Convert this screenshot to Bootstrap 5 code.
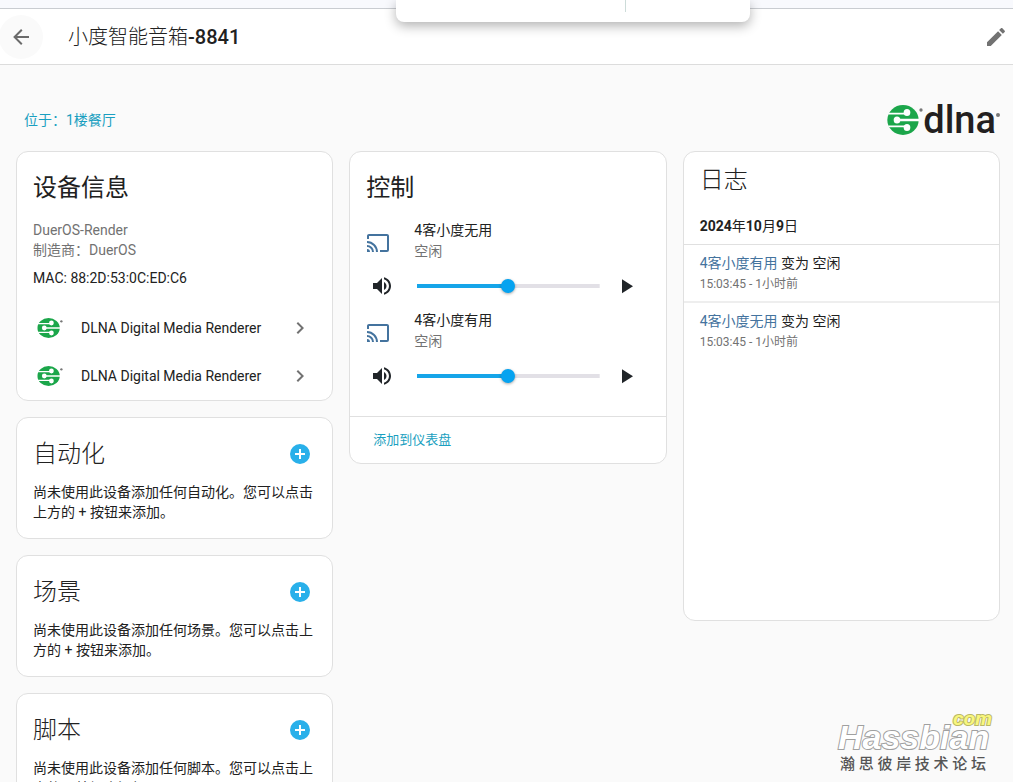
<!DOCTYPE html>
<html lang="zh-CN">
<head>
<meta charset="utf-8">
<meta name="viewport" content="width=device-width, initial-scale=1">
<title>小度智能音箱-8841</title>
<link href="https://cdn.jsdelivr.net/npm/bootstrap@5.3.0/dist/css/bootstrap.min.css" rel="stylesheet">
<style>
  body { font-family: Roboto, "Noto Sans CJK SC", sans-serif; font-size: 14px; line-height: 20px; color: #212121; background: #fafafa; }
  button { color: inherit; }
  a { text-decoration: none; }
  .browser-edge { height: 9px; background: #f8f9fd; border-bottom: 1px solid #c9ccd1; }
  .topbar { height: 56px; border-bottom: 1px solid #dcdcdc; }
  .back-btn { width: 44px; height: 44px; background: #fafafa; color: #6b6b6b; margin-left: -1px; }
  .page-title { font-size: 20px; line-height: 28px; margin-left: 25px; font-weight: 300; }
  .title-number { font-weight: 500; }
  .popup { left: 396px; top: 0; width: 354px; height: 22px; border-radius: 0 0 8px 8px; box-shadow: 0 4px 12px rgba(0,0,0,.3); }
  .popup-rule { width: 1px; height: 12px; background: #cddcd9; margin-left: 229px; }
  .page-main { padding: 39px 13px 16px 16px; }
  .location-row { height: 32px; margin-bottom: 15px; padding-left: 8px; }
  .teal { color: #1a9fc0; }
  .wordmark { font-size: 38px; line-height: 32px; font-weight: 500; color: #231f20; }
  .panel { border: 1px solid #e0e0e0; border-radius: 12px; background: #fff; }
  .panel-title { font-size: 24px; line-height: 48px; padding: 12px 16px 0; margin: 0; font-weight: 400; }
  .panel-title.light { font-weight: 300; }
  .soft { color: #727272; }
  .service-row { height: 48px; padding: 0 20px; color: #212121; }
  .service-name { margin-left: 18px; }
  .add-btn { width: 48px; height: 48px; margin: 12px 8px 0 0; color: #29b0ea; }
  .entity-info { line-height: 21px; gap: 24px; }
  .entity-icon { color: #44739e; padding-top: 4px; box-sizing: content-box; }
  .entity-controls { height: 48px; }
  .vol-btn { width: 32px; height: 32px; }
  .play-btn { width: 48px; height: 48px; }
  .volume { appearance: none; -webkit-appearance: none; height: 16px; margin: 0 2px 0 19px; background: linear-gradient(to right, #16a5e9 50%, #e2e0e6 50%) center / 100% 4px no-repeat; min-width: 0; }
  .volume::-webkit-slider-thumb { -webkit-appearance: none; width: 14px; height: 14px; border-radius: 50%; background: #06a3f0; box-shadow: 0 1px 3px rgba(0,0,0,.35); }
  .panel-foot { height: 47px; margin-top: 16px; padding-left: 23px; border-top: 1px solid #e0e0e0; font-size: 13px; }
  .log-panel { min-height: 470px; }
  .log-title { font-size: 24px; line-height: 32px; padding: 12px 16px 0; margin: 0; font-weight: 300; }
  .log-date { font-size: 14px; line-height: 20px; padding: 20px 16px 8px; margin: 0; font-weight: 700; border-bottom: 1px solid #e0e0e0; }
  .log-date span { font-weight: 400; }
  .log-entry { padding: 8px 16px 6px; line-height: 21px; }
  .log-entry + .log-entry { border-top: 2px solid #eee; }
  .log-entry a { color: #44739e; }
  .log-time { font-size: 12px; color: #727272; }
  .watermark { right: 21px; bottom: 8px; width: 154px; }
  .wm-name, .wm-com { font-family: "Liberation Sans", sans-serif; font-style: italic; font-weight: 700; paint-order: stroke fill; }
  .wm-name { font-size: 34px; line-height: 34px; color: #fff; -webkit-text-stroke: 2px #a0a0a0; }
  .wm-com { right: 0; top: -11px; font-size: 19px; line-height: 20px; color: #f9f77c; -webkit-text-stroke: 2px #b9b768; }
  .wm-sub { width: 148px; font-size: 15px; line-height: 20px; font-weight: 500; color: #555; text-align-last: justify; padding-left: 2px; }
</style>
</head>
<body class="vh-100 overflow-hidden position-relative">
<svg class="d-none">
  <symbol id="dlna" viewBox="0 0 108 84">
    <ellipse cx="48" cy="42" rx="47" ry="42" fill="#1ba64a"/>
    <g fill="none" stroke="#fff" stroke-width="5"><path d="M4 24H58M4 60H58"/><path d="M30 42H97" stroke-width="7"/></g>
    <g fill="#fff"><circle cx="60" cy="21" r="10"/><circle cx="30" cy="42" r="10"/><circle cx="60" cy="63" r="10"/></g>
    <circle cx="102" cy="14" r="5" fill="#777"/>
  </symbol>
  <symbol id="cast" viewBox="0 0 24 24"><path fill="currentColor" d="M1 10V12A9 9 0 0 1 10 21H12C12 14.92 7.07 10 1 10M1 14V16A5 5 0 0 1 6 21H8A7 7 0 0 0 1 14M1 18V21H4A3 3 0 0 0 1 18M21 3H3C1.89 3 1 3.89 1 5V8H3V5H21V19H14V21H21A2 2 0 0 0 23 19V5C23 3.89 22.1 3 21 3Z"/></symbol>
  <symbol id="vol" viewBox="0 0 24 24"><path fill="currentColor" d="M14 3.23V5.29C16.89 6.15 19 8.83 19 12S16.89 17.84 14 18.7V20.77C18 19.86 21 16.28 21 12S18 4.14 14 3.23M16.5 12C16.5 10.23 15.5 8.71 14 7.97V16C15.5 15.29 16.5 13.76 16.5 12M3 9V15H7L12 20V4L7 9H3Z"/></symbol>
  <symbol id="play" viewBox="0 0 24 24"><path fill="currentColor" d="M8 5.14V19.14L19 12.14L8 5.14Z"/></symbol>
  <symbol id="plus" viewBox="0 0 24 24"><path fill="currentColor" d="M17 13H13V17H11V13H7V11H11V7H13V11H17M12 2A10 10 0 1 0 22 12A10 10 0 0 0 12 2Z"/></symbol>
  <symbol id="next" viewBox="0 0 24 24"><path fill="currentColor" d="M8.59 16.58L13.17 12L8.59 7.41L10 6L16 12L10 18L8.59 16.58Z"/></symbol>
</svg>

<div class="browser-edge"></div>
<header class="topbar bg-white d-flex align-items-center">
  <button class="btn back-btn rounded-circle p-0 border-0 d-flex align-items-center justify-content-center" aria-label="返回">
    <svg width="24" height="24" viewBox="0 0 24 24"><path fill="currentColor" d="M20 11V13H8L13.5 18.5L12.08 19.92L4.16 12L12.08 4.08L13.5 5.5L8 11H20Z"/></svg>
  </button>
  <h1 class="page-title mb-0 flex-grow-1">小度智能音箱<span class="title-number">-8841</span></h1>
  <button class="btn p-0 border-0 soft me-1 d-flex" aria-label="编辑">
    <svg width="26" height="24" viewBox="0 0 24 24"><path fill="currentColor" d="M20.71 7.04C21.1 6.65 21.1 6 20.71 5.63L18.37 3.29C18 2.9 17.35 2.9 16.96 3.29L15.12 5.12L18.87 8.87M3 17.25V21H6.75L17.81 9.93L14.06 6.18L3 17.25Z"/></svg>
  </button>
</header>
<div class="popup position-absolute bg-white"><div class="popup-rule"></div></div>

<main class="page-main">
  <div class="location-row d-flex align-items-center justify-content-between">
    <a href="#" class="teal">位于：1楼餐厅</a>
    <div class="d-flex align-items-center">
      <svg width="36" height="30" viewBox="0 0 108 84" preserveAspectRatio="none"><use href="#dlna"/></svg>
      <span class="wordmark">dlna</span><svg width="4" height="14" viewBox="0 0 4 14"><circle cx="2" cy="2" r="2" fill="#777"/></svg>
    </div>
  </div>

  <div class="row gx-3 align-items-start">
    <div class="col-4 d-flex flex-column gap-3">
      <section class="panel">
        <h2 class="panel-title">设备信息</h2>
        <div class="px-3 pt-2 pb-3">
          <div class="soft">DuerOS-Render</div>
          <div class="soft">制造商：DuerOS</div>
          <div class="mt-2">MAC: 88:2D:53:0C:ED:C6</div>
        </div>
        <a href="#" class="service-row d-flex align-items-center">
          <svg width="26" height="20" viewBox="0 0 108 84"><use href="#dlna"/></svg>
          <span class="flex-grow-1 service-name">DLNA Digital Media Renderer</span>
          <svg class="soft" width="24" height="24"><use href="#next"/></svg>
        </a>
        <a href="#" class="service-row d-flex align-items-center">
          <svg width="26" height="20" viewBox="0 0 108 84"><use href="#dlna"/></svg>
          <span class="flex-grow-1 service-name">DLNA Digital Media Renderer</span>
          <svg class="soft" width="24" height="24"><use href="#next"/></svg>
        </a>
      </section>
      <section class="panel">
        <div class="d-flex justify-content-between">
          <h2 class="panel-title light">自动化</h2>
          <button class="btn border-0 p-0 add-btn" aria-label="添加自动化"><svg width="24" height="24"><use href="#plus"/></svg></button>
        </div>
        <p class="px-3 pt-1 pb-3 mb-0">尚未使用此设备添加任何自动化。您可以点击上方的 + 按钮来添加。</p>
      </section>
      <section class="panel">
        <div class="d-flex justify-content-between">
          <h2 class="panel-title light">场景</h2>
          <button class="btn border-0 p-0 add-btn" aria-label="添加场景"><svg width="24" height="24"><use href="#plus"/></svg></button>
        </div>
        <p class="px-3 pt-1 pb-3 mb-0">尚未使用此设备添加任何场景。您可以点击上方的 + 按钮来添加。</p>
      </section>
      <section class="panel">
        <div class="d-flex justify-content-between">
          <h2 class="panel-title light">脚本</h2>
          <button class="btn border-0 p-0 add-btn" aria-label="添加脚本"><svg width="24" height="24"><use href="#plus"/></svg></button>
        </div>
        <p class="px-3 pt-1 pb-3 mb-0">尚未使用此设备添加任何脚本。您可以点击上方的 + 按钮来添加。</p>
      </section>
    </div>

    <div class="col-4">
      <section class="panel">
        <h2 class="panel-title">控制</h2>
        <div class="px-3 pt-2">
          <div class="entity-info d-flex align-items-center">
            <svg class="entity-icon" width="24" height="24"><use href="#cast"/></svg>
            <div><div>4客小度无用</div><div class="soft">空闲</div></div>
          </div>
          <div class="entity-controls d-flex align-items-center">
            <button class="btn border-0 p-0 vol-btn" aria-label="静音"><svg width="24" height="24"><use href="#vol"/></svg></button>
            <input type="range" class="volume flex-grow-1" value="50" aria-label="4客小度无用 音量">
            <button class="btn border-0 p-0 play-btn" aria-label="播放"><svg width="24" height="24"><use href="#play"/></svg></button>
          </div>
          <div class="entity-info d-flex align-items-center">
            <svg class="entity-icon" width="24" height="24"><use href="#cast"/></svg>
            <div><div>4客小度有用</div><div class="soft">空闲</div></div>
          </div>
          <div class="entity-controls d-flex align-items-center">
            <button class="btn border-0 p-0 vol-btn" aria-label="静音"><svg width="24" height="24"><use href="#vol"/></svg></button>
            <input type="range" class="volume flex-grow-1" value="50" aria-label="4客小度有用 音量">
            <button class="btn border-0 p-0 play-btn" aria-label="播放"><svg width="24" height="24"><use href="#play"/></svg></button>
          </div>
        </div>
        <div class="panel-foot d-flex align-items-center"><button class="border-0 bg-transparent p-0 teal">添加到仪表盘</button></div>
      </section>
    </div>

    <div class="col-4">
      <section class="panel log-panel">
        <h2 class="log-title">日志</h2>
        <h3 class="log-date">2024<span>年</span>10<span>月</span>9<span>日</span></h3>
        <div class="log-entry">
          <div><a href="#">4客小度有用</a> 变为 空闲</div>
          <div class="log-time">15:03:45 - 1小时前</div>
        </div>
        <div class="log-entry">
          <div><a href="#">4客小度无用</a> 变为 空闲</div>
          <div class="log-time">15:03:45 - 1小时前</div>
        </div>
      </section>
    </div>
  </div>
</main>

<div class="watermark position-absolute">
  <div class="wm-name">Hassbian</div>
  <div class="wm-com position-absolute">com</div>
  <div class="wm-sub">瀚思彼岸技术论坛</div>
</div>
<script src="https://cdn.jsdelivr.net/npm/bootstrap@5.3.0/dist/js/bootstrap.bundle.min.js"></script>
</body>
</html>
